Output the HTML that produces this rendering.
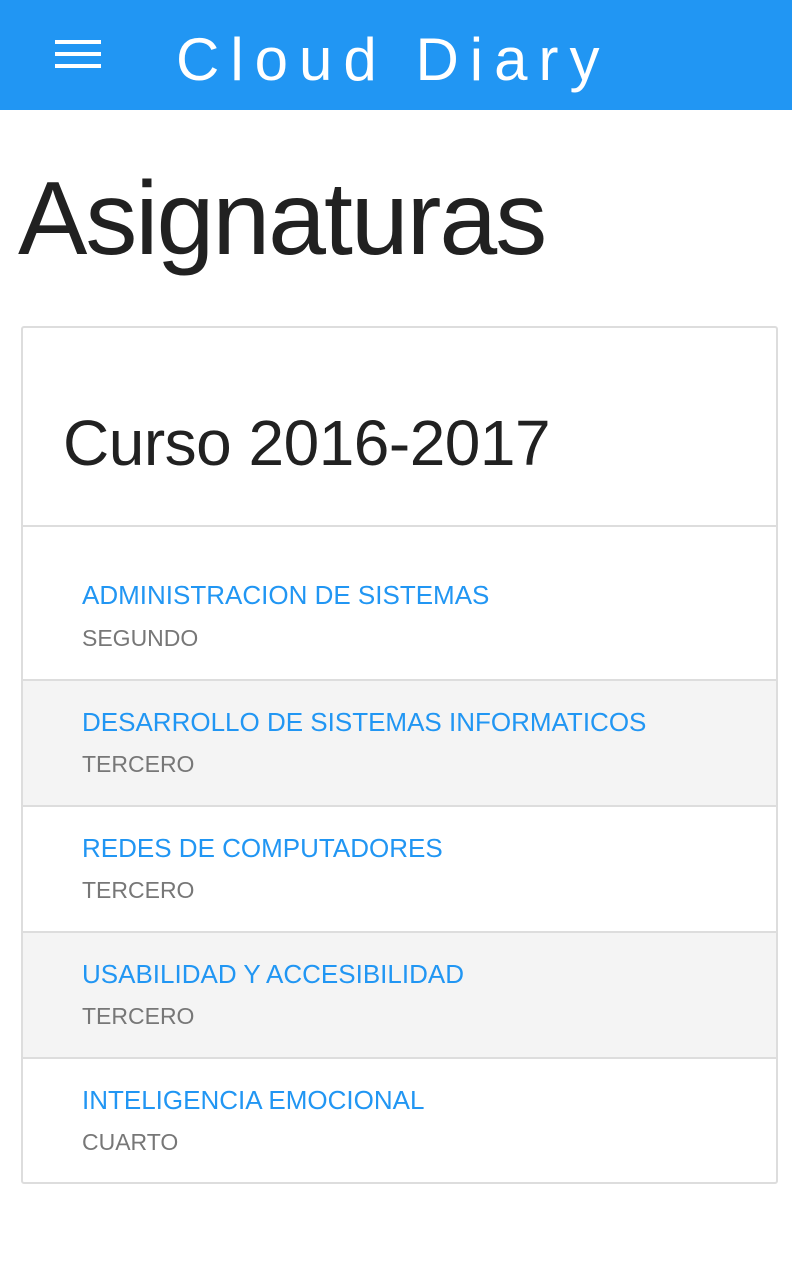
<!DOCTYPE html>
<html><head><meta charset="utf-8"><style>
*{margin:0;padding:0;box-sizing:border-box}
body{width:792px;height:1262px;background:#fff;font-family:"Liberation Sans",sans-serif;position:relative;overflow:hidden}
.hdr{position:absolute;left:0;top:0;width:792px;height:110px;background:#2196F3}
.bar{position:absolute;left:55px;width:46px;height:4px;background:#fff}
.ttl{position:absolute;left:176px;top:25px;font-size:60px;line-height:70px;color:#fff;font-weight:300;letter-spacing:11px;white-space:nowrap}
.h1{position:absolute;left:18px;top:164px;font-size:104px;line-height:110px;color:#212121;letter-spacing:-2px;white-space:nowrap}
.card{position:absolute;left:21px;top:326px;width:757px;height:858px;border:2px solid #ddd;border-radius:3px;overflow:hidden}
.ch{position:absolute;left:40px;top:80px;font-size:64px;line-height:70px;color:#212121;white-space:nowrap;letter-spacing:-0.5px}
.row{position:absolute;left:0;width:753px;border-top:2px solid #ddd}
.row.g{background:#f4f4f4}
.t{position:absolute;left:59px;font-size:26px;line-height:26px;color:#2196F3;white-space:nowrap}
.s{position:absolute;left:59px;font-size:23px;line-height:23px;color:#777;white-space:nowrap}
</style></head><body>
<div class="hdr">
<div class="bar" style="top:40px"></div><div class="bar" style="top:52px"></div><div class="bar" style="top:64px"></div>
<div class="ttl">Cloud Diary</div>
</div>
<div class="h1">Asignaturas</div>
<div class="card">
<div class="ch">Curso 2016-2017</div>
<div class="row" style="top:197px;height:154px"><div class="t" style="top:55px">ADMINISTRACION DE SISTEMAS</div><div class="s" style="top:100px">SEGUNDO</div></div>
<div class="row g" style="top:351px;height:126px"><div class="t" style="top:28px">DESARROLLO DE SISTEMAS INFORMATICOS</div><div class="s" style="top:72px">TERCERO</div></div>
<div class="row" style="top:477px;height:126px"><div class="t" style="top:28px">REDES DE COMPUTADORES</div><div class="s" style="top:72px">TERCERO</div></div>
<div class="row g" style="top:603px;height:126px"><div class="t" style="top:28px">USABILIDAD Y ACCESIBILIDAD</div><div class="s" style="top:72px">TERCERO</div></div>
<div class="row" style="top:729px;height:127px"><div class="t" style="top:28px">INTELIGENCIA EMOCIONAL</div><div class="s" style="top:72px">CUARTO</div></div>
</div>
</body></html>
